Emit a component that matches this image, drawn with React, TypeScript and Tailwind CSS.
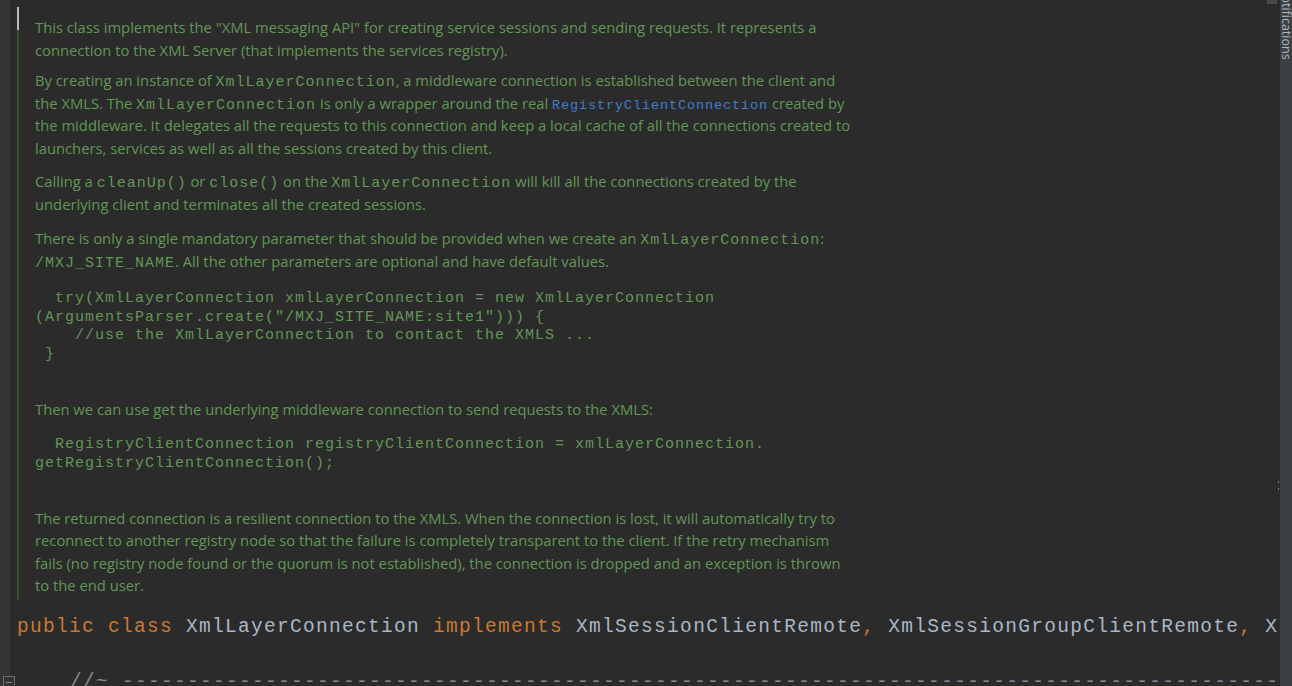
const prose = "font-['Open_Sans','Noto_Sans',sans-serif] text-[14.78px] leading-[22.5px] text-[#629755] whitespace-nowrap";
const mono = "font-['Liberation_Mono','Courier_New',monospace]";

function Code({ children }: { children: React.ReactNode }) {
  return <span className={`${mono} text-[15px] leading-none tracking-[1px]`}>{children}</span>;
}

function Line({ children }: { children: React.ReactNode }) {
  return <div className="h-[22.5px]">{children}</div>;
}

export default function App() {
  return (
    <div className="flex h-[686px] w-[1292px] overflow-hidden bg-[#2b2b2b]">
      {/* gutter */}
      <div className="relative w-[10px] shrink-0 border-r border-[#3a3c3e] bg-[#313335]">
        <div className="absolute left-[3px] top-[676px] h-[12px] w-[12px] border border-[#6e6e6e] bg-[#313335]">
          <div className="mx-auto mt-[5px] h-px w-[6px] bg-[#8a8a8a]" />
        </div>
      </div>

      {/* editor */}
      <div className="relative min-w-0 flex-1 overflow-hidden">
        <div className="absolute right-[3px] top-0 h-[4px] w-[10px] bg-[#4a4a4a]" />

        <div className="ml-[7px] mt-[7px] w-[860px] border-l-2 border-[#3a5034] pb-[3px] pl-[16px] pt-[9px]">
          <div className="absolute left-[7px] top-[7px] h-[23px] w-[2px] bg-[#bbbbbb]" />

          <div className={prose}>
            <Line>This class implements the "XML messaging API" for creating service sessions and sending requests. It represents a</Line>
            <Line>connection to the XML Server (that implements the services registry).</Line>
          </div>

          <div className={`${prose} mt-[8px]`}>
            <Line>
              By creating an instance of <Code>XmlLayerConnection</Code>, a middleware connection is established between the client and
            </Line>
            <Line>
              the XMLS. The <Code>XmlLayerConnection</Code> is only a wrapper around the real{" "}
              <span className={`${mono} text-[13.5px] leading-none tracking-[0.9px] text-[#3f7fd0]`}>RegistryClientConnection</span> created by
            </Line>
            <Line>the middleware. It delegates all the requests to this connection and keep a local cache of all the connections created to</Line>
            <Line>launchers, services as well as all the sessions created by this client.</Line>
          </div>

          <div className={`${prose} mt-[11px]`}>
            <Line>
              Calling a <Code>cleanUp()</Code> or <Code>close()</Code> on the <Code>XmlLayerConnection</Code> will kill all the connections created by the
            </Line>
            <Line>underlying client and terminates all the created sessions.</Line>
          </div>

          <div className={`${prose} mt-[12px]`}>
            <Line>
              There is only a single mandatory parameter that should be provided when we create an <Code>XmlLayerConnection</Code>:
            </Line>
            <Line>
              <Code>/MXJ_SITE_NAME</Code>. All the other parameters are optional and have default values.
            </Line>
          </div>

          <pre className={`${mono} mt-[18px] text-[15px] leading-[18.7px] tracking-[1px] text-[#629755]`}>
{`  try(XmlLayerConnection xmlLayerConnection = new XmlLayerConnection
(ArgumentsParser.create("/MXJ_SITE_NAME:site1"))) {
    //use the XmlLayerConnection to contact the XMLS ...
 }`}
          </pre>

          <div className={`${prose} mt-[33px]`}>
            <Line>Then we can use get the underlying middleware connection to send requests to the XMLS:</Line>
          </div>

          <pre className={`${mono} mt-[16px] text-[15px] leading-[18.7px] tracking-[1px] text-[#629755]`}>
{`  RegistryClientConnection registryClientConnection = xmlLayerConnection.
getRegistryClientConnection();`}
          </pre>

          <div className={`${prose} mt-[33px]`}>
            <Line>The returned connection is a resilient connection to the XMLS. When the connection is lost, it will automatically try to</Line>
            <Line>reconnect to another registry node so that the failure is completely transparent to the client. If the retry mechanism</Line>
            <Line>fails (no registry node found or the quorum is not established), the connection is dropped and an exception is thrown</Line>
            <Line>to the end user.</Line>
          </div>
        </div>

        <div className={`${mono} mt-[14px] whitespace-nowrap pl-[7px] text-[19.5px] leading-[26px] tracking-[1.3px] text-[#a9b7c6]`}>
          <span className="text-[#cc7832]">public class </span>
          XmlLayerConnection
          <span className="text-[#cc7832]"> implements </span>
          XmlSessionClientRemote<span className="text-[#cc7832]">, </span>
          XmlSessionGroupClientRemote<span className="text-[#cc7832]">, </span>
          X
        </div>

        <div className={`${mono} mt-[29px] whitespace-nowrap pl-[60px] text-[19.5px] leading-[26px] tracking-[1.3px] text-[#7f8a96]`}>
          {"//~ " + "-".repeat(92)}
        </div>

        <div className="absolute right-[1px] top-[481px] h-[2px] w-[1px] bg-[#4a88c7]" />
        <div className="absolute right-[1px] top-[488px] h-[2px] w-[1px] bg-[#4a88c7]" />
      </div>

      {/* right tool strip */}
      <div className="relative w-[12px] shrink-0 overflow-hidden bg-[#3c3f41]">
        <div className="absolute left-[0px] top-[-14px] origin-top-left translate-x-[12px] rotate-90 whitespace-nowrap font-['Open_Sans','Noto_Sans',sans-serif] text-[12.5px] leading-[12px] text-[#a9b7c6]">
          Notifications
        </div>
      </div>
    </div>
  );
}
